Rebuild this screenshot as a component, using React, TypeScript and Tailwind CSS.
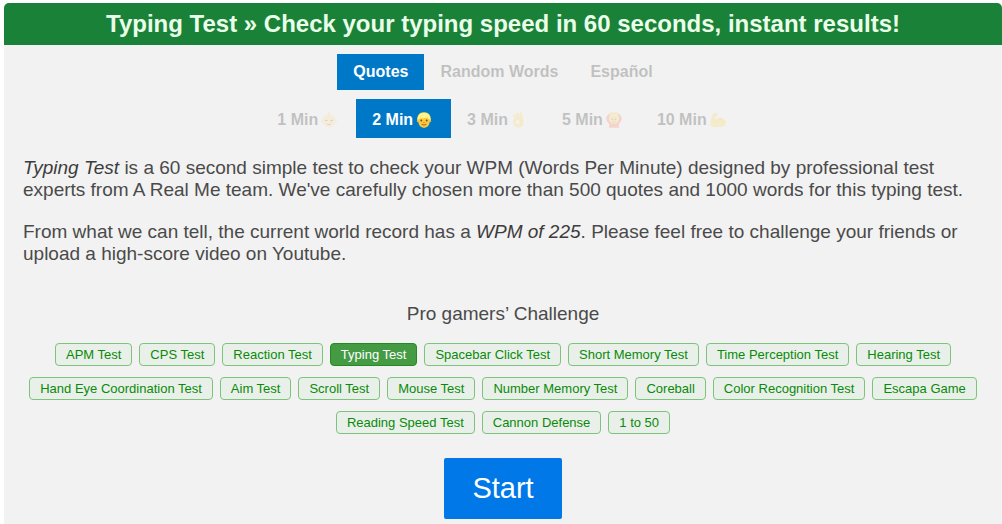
import type { ReactNode } from 'react';
import { useState } from 'react';
import { clsx } from 'clsx';

function BabyIcon() {
  return (
    <svg viewBox="0 0 16 16" className="size-4" aria-hidden="true">
      <circle cx="2" cy="9.2" r="1.6" fill="#ffcf5c" />
      <circle cx="14" cy="9.2" r="1.6" fill="#ffcf5c" />
      <circle cx="8" cy="8.8" r="6.5" fill="#ffdd80" />
      <path d="M8.2 3.2C6.4 2.6 6.8.7 8.4.8" fill="none" stroke="#f0a030" strokeWidth="1" />
      <path d="M4.2 8.8q1.1-.9 2.2 0M9.6 8.8q1.1-.9 2.2 0" fill="none" stroke="#5a4a66" strokeWidth="1.2" />
      <path d="M6 12q2 1.3 4 0" fill="none" stroke="#a4503c" strokeWidth="1" />
    </svg>
  );
}

function PersonIcon() {
  return (
    <svg viewBox="0 0 16 16" className="size-4" aria-hidden="true">
      <path d="M1.2 8.6C.7 3.4 3.5.2 8 .2s7.3 3.2 6.8 8.4z" fill="#ffe766" />
      <circle cx="2.2" cy="9" r="1.3" fill="#f8bf3a" />
      <circle cx="13.8" cy="9" r="1.3" fill="#f8bf3a" />
      <path d="M2.4 6.5C2.4 4.7 4 3.6 8 3.6s5.6 1.1 5.6 2.9v3.2c0 3.7-2.7 6-5.6 6s-5.6-2.3-5.6-6z" fill="#fcc93c" />
      <path d="M1.8 7.6C1.6 3.6 4.4 1 8 1c3.8 0 6.4 2.4 6.2 6.6-1.4-.4-2.4-1.1-2.9-2.1-2 .9-6.3.1-9.5 2.1z" fill="#fff28a" />
      <circle cx="5.3" cy="8.5" r=".9" fill="#6b4a35" />
      <circle cx="10.7" cy="8.5" r=".9" fill="#6b4a35" />
      <path d="M7.2 10.5h1.6" stroke="#e08f20" strokeWidth=".9" />
      <path d="M5.6 12.4q2.4 1.3 4.8 0" fill="none" stroke="#a8642f" strokeWidth="1" />
    </svg>
  );
}

function OkHandIcon() {
  return (
    <svg viewBox="0 0 16 16" className="size-4" aria-hidden="true">
      <path
        d="M5 7 3.2 3.6M7 6.6 6.2 1.8M9.6 7 9.6 1.4"
        stroke="#ffd33b"
        strokeWidth="2.5"
        strokeLinecap="round"
      />
      <path
        fillRule="evenodd"
        d="M2 10c0-2.6 2-4.6 4.4-4.6l5-.8c1.3 1.7 1.3 4.4 1 6.4-.3 2.9-2.1 4.7-4.9 4.7C4.4 15.7 2 13.4 2 10zm4.6-1.9a2.1 2.1 0 1 0 0 4.2 2.1 2.1 0 0 0 0-4.2z"
        fill="#ffd33b"
      />
      <path d="M7.8 5.2v-2.6" stroke="#eba82a" strokeWidth=".5" />
    </svg>
  );
}

function HandsOverHeadIcon() {
  return (
    <svg viewBox="0 0 16 16" className="size-4" aria-hidden="true">
      <path
        d="M5.2 1.5C1.7 1.7-.3 5 .5 8.1c.4 1.7 1.9 3 2.8 4.1l-.4 3.5h10.2l-.4-3.5c.9-1.1 2.4-2.4 2.8-4.1.8-3.1-1.2-6.4-4.7-6.6z"
        fill="#ff5c35"
      />
      <circle cx="8" cy="6.8" r="5" fill="#ffe066" />
      <ellipse cx="8" cy="7.8" rx="3.6" ry="4.1" fill="#ffc933" />
      <path d="M4.4 2 6.4 1M11.6 2 9.6 1" stroke="#ffc933" strokeWidth="2" strokeLinecap="round" />
      <circle cx="6.4" cy="7.3" r=".7" fill="#543930" />
      <circle cx="9.6" cy="7.3" r=".7" fill="#543930" />
      <path d="M6.5 9.8q1.5 1 3 0" fill="none" stroke="#9b572d" strokeWidth=".8" />
    </svg>
  );
}

function BicepsIcon() {
  return (
    <svg viewBox="0 0 16 16" className="size-4" aria-hidden="true">
      <path
        d="M3.2 1.4C4.4.4 6.6.5 7.2 1.7c.5 1.2-.2 2.3-1.4 2.7L4.9 5l.9 3.2c1.6-2.4 4.2-2.9 5.9-1.9 3.3.2 4.5 3 3.9 5.5-.7 2.6-3.9 3.6-7.1 3.2C4.9 15.1 1.5 15 .6 13.8.3 9.9 1.3 4.8 3.2 1.4z"
        fill="#ffd02e"
      />
      <path d="M5.8 8.2c-.2.9-.8 1.5-1.5 1.9M11.7 6.5c-1 .2-1.6.7-2 1.3" fill="none" stroke="#e59a20" strokeWidth=".6" />
    </svg>
  );
}

const modes = ['Quotes', 'Random Words', 'Español'];

const durations: { label: string; icon: ReactNode }[] = [
  { label: '1 Min', icon: <BabyIcon /> },
  { label: '2 Min', icon: <PersonIcon /> },
  { label: '3 Min', icon: <OkHandIcon /> },
  { label: '5 Min', icon: <HandsOverHeadIcon /> },
  { label: '10 Min', icon: <BicepsIcon /> },
];

const challenges = [
  'APM Test',
  'CPS Test',
  'Reaction Test',
  'Typing Test',
  'Spacebar Click Test',
  'Short Memory Test',
  'Time Perception Test',
  'Hearing Test',
  'Hand Eye Coordination Test',
  'Aim Test',
  'Scroll Test',
  'Mouse Test',
  'Number Memory Test',
  'Coreball',
  'Color Recognition Test',
  'Escapa Game',
  'Reading Speed Test',
  'Cannon Defense',
  '1 to 50',
];

function TabButton({
  active,
  className,
  onClick,
  children,
}: {
  active: boolean;
  className?: string;
  onClick: () => void;
  children: ReactNode;
}) {
  return (
    <button
      type="button"
      aria-pressed={active}
      onClick={onClick}
      className={clsx(
        'flex items-center px-4 text-base font-bold',
        active ? 'bg-[#0078c8] text-white' : 'text-black opacity-20',
        className
      )}
    >
      {children}
    </button>
  );
}

export default function App() {
  const [mode, setMode] = useState('Quotes');
  const [duration, setDuration] = useState('2 Min');

  return (
    <main className="ml-1 mt-[3px] min-h-screen rounded-t-[5px] bg-[#f2f2f2] font-['Liberation_Sans',Arial,sans-serif] text-[#4a4a4a]">
      <h1 className="rounded-t-[5px] bg-[#1a8238] px-4 py-[5px] text-center text-2xl font-bold text-[#eaffea]">
        Typing Test » Check your typing speed in 60 seconds, instant results!
      </h1>

      <div className="mt-[9px] flex flex-wrap justify-center">
        {modes.map((item) => (
          <TabButton key={item} className="h-9" active={item === mode} onClick={() => setMode(item)}>
            {item}
          </TabButton>
        ))}
      </div>
      <div className="mt-[9px] flex flex-wrap justify-center">
        {durations.map(({ label, icon }) => (
          <TabButton
            key={label}
            className="h-[39px] gap-[3px] pt-0.5"
            active={label === duration}
            onClick={() => setDuration(label)}
          >
            {label}
            <span className="w-[19px]">{icon}</span>
          </TabButton>
        ))}
      </div>

      <div className="mt-[19px] flex flex-col gap-5 px-[19px] text-[19px] leading-[22px]">
        <p>
          <em className="text-[#3c3c3c]">Typing Test</em> is a 60 second simple test to check your WPM (Words Per
          Minute) designed by professional test experts from A Real Me team. We've carefully chosen more than 500
          quotes and 1000 words for this typing test.
        </p>
        <p>
          From what we can tell, the current world record has a <em className="text-[#3c3c3c]">WPM of 225</em>. Please
          feel free to challenge your friends or upload a high-score video on Youtube.
        </p>
      </div>

      <h2 className="mt-[38px] text-center text-[19px] leading-[22px]">Pro gamers’ Challenge</h2>
      <nav className="mt-[18px] flex flex-wrap justify-center gap-x-[7px] gap-y-[11px] px-5">
        {challenges.map((name) => (
          <a
            key={name}
            href="#"
            aria-current={name === 'Typing Test' ? 'page' : undefined}
            className={clsx(
              'rounded border px-2.5 text-[13px] leading-[21px]',
              name === 'Typing Test'
                ? 'border-[#228b22] bg-[#449b44] text-white'
                : 'border-[#7cc47c] bg-[#e9f0e9] text-[#0a8a0a]'
            )}
          >
            {name}
          </a>
        ))}
      </nav>

      <div className="mt-6 flex justify-center">
        <button type="button" className="rounded-xs bg-[#0078e7] px-7 py-3 text-[29px] leading-[37px] text-white">
          Start
        </button>
      </div>
    </main>
  );
}
